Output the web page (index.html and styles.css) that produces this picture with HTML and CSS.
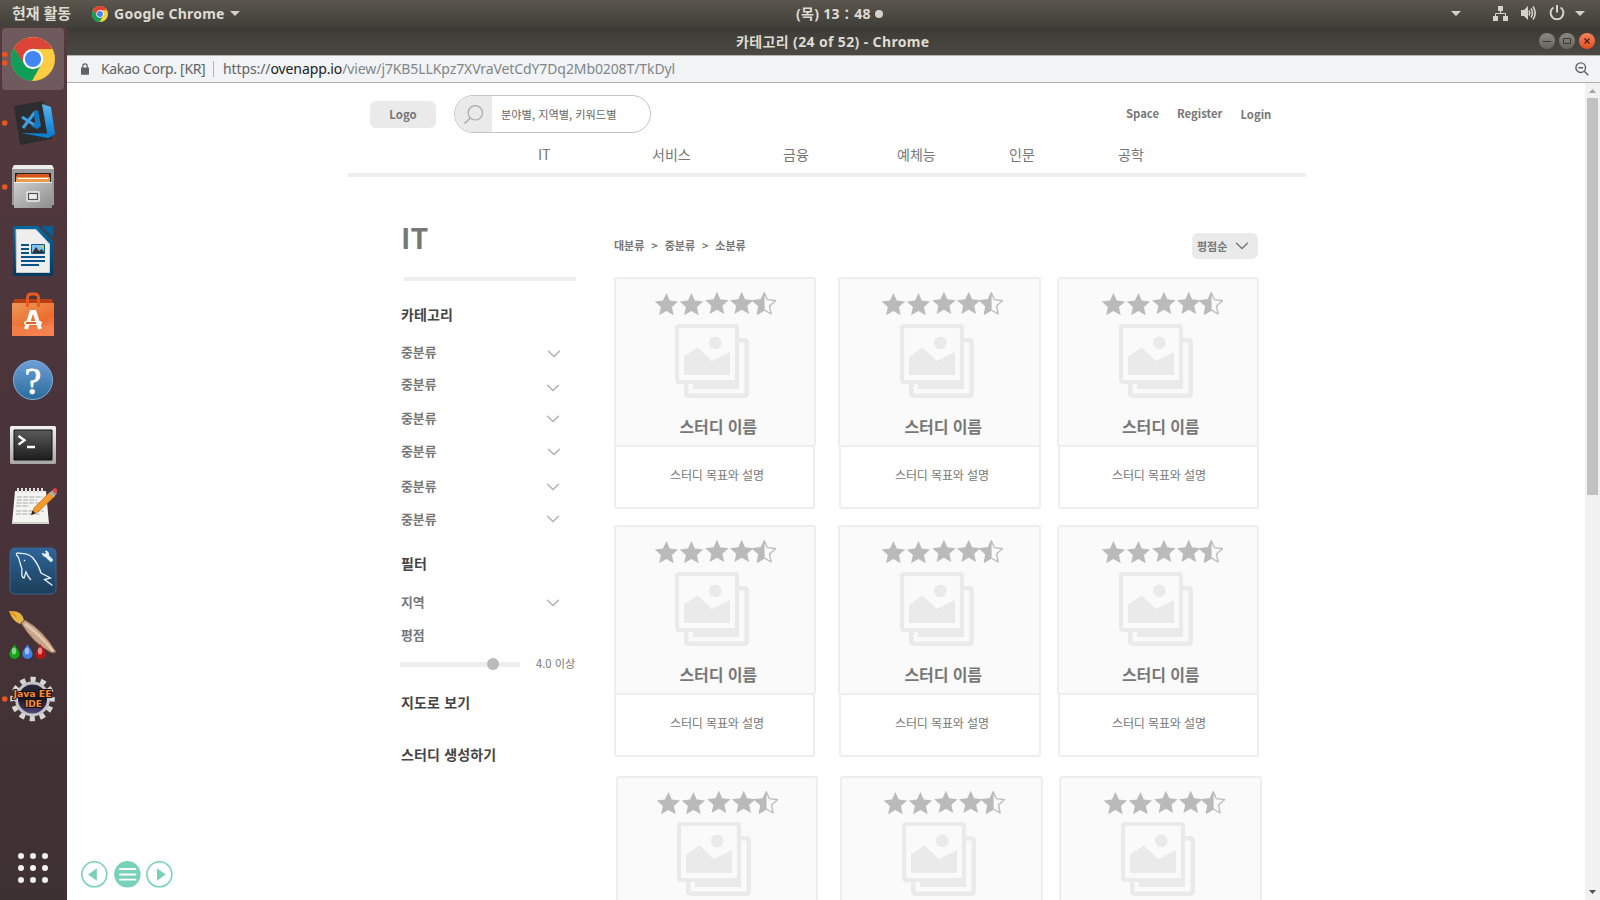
FILE: index.html
```html
<!DOCTYPE html>
<html lang="ko">
<head>
<meta charset="utf-8">
<title>카테고리 (24 of 52) - Chrome</title>
<link rel="stylesheet" href="styles.css">
</head>
<body>
<svg class="defs" width="0" height="0">
  <defs>
    <linearGradient id="gBlue" x1="0" y1="0" x2="0" y2="1"><stop offset="0" stop-color="#6f9ed8"/><stop offset="1" stop-color="#2a6c9b"/></linearGradient>
    <linearGradient id="gNavy" x1="0" y1="0" x2="0" y2="1"><stop offset="0" stop-color="#2d659b"/><stop offset="1" stop-color="#1c3e58"/></linearGradient>
    <linearGradient id="gWriter" x1="0" y1="0" x2="0" y2="1"><stop offset="0" stop-color="#0369a3"/><stop offset="1" stop-color="#043b5e"/></linearGradient>
    <linearGradient id="gBag" x1="0" y1="0" x2="0.6" y2="1"><stop offset="0" stop-color="#e99a58"/><stop offset="0.7" stop-color="#ef6c2f"/><stop offset="1" stop-color="#f58350"/></linearGradient>
    <linearGradient id="gSilver" x1="0" y1="0" x2="1" y2="1"><stop offset="0" stop-color="#cfcfcf"/><stop offset="1" stop-color="#8d8d8d"/></linearGradient>
    <linearGradient id="gTerm" x1="0" y1="0" x2="0" y2="1"><stop offset="0" stop-color="#5a5a5a"/><stop offset="1" stop-color="#1d1d1d"/></linearGradient>
    <linearGradient id="gFrame" x1="0" y1="0" x2="0" y2="1"><stop offset="0" stop-color="#f2f2f2"/><stop offset="1" stop-color="#a9a6a6"/></linearGradient>
    <linearGradient id="gVs" x1="0" y1="0" x2="0" y2="1"><stop offset="0" stop-color="#5bb5ee"/><stop offset="1" stop-color="#0078cf"/></linearGradient>
    <linearGradient id="gCore" x1="0" y1="0" x2="0" y2="1"><stop offset="0" stop-color="#2c2b3d"/><stop offset="0.5" stop-color="#191627"/><stop offset="1" stop-color="#5a4a86"/></linearGradient>
    <linearGradient id="gBtn" x1="0" y1="0" x2="0" y2="1"><stop offset="0" stop-color="#8b8983"/><stop offset="1" stop-color="#66645d"/></linearGradient>
    <linearGradient id="gClose" x1="0" y1="0" x2="0" y2="1"><stop offset="0" stop-color="#f58361"/><stop offset="1" stop-color="#e24f1d"/></linearGradient>
    <symbol id="chrome" viewBox="0 0 44 44">
      <circle cx="22" cy="22" r="22" fill="#fecd41"/>
      <path d="M2.950 11A22 22 0 0 1 41.300 12H22L12.500 27.500z" fill="#db4437"/>
      <path d="M2.950 11A22 22 0 0 0 21 44L30.500 27L12.800 26.500z" fill="#0f9d58"/>
      <circle cx="22" cy="22" r="10.200" fill="#fff"/>
      <circle cx="22" cy="22" r="8.100" fill="#4285f4"/>
    </symbol>
    <path id="star" d="M12 .3l3.400 7.600 8.300.9-6.200 5.500 1.800 8.200L12 18.300l-7.300 4.200 1.800-8.200L.3 8.800l8.300-.9z" fill="#bababa"/>
    <symbol id="rating" viewBox="0 0 126 26">
      <use href="#star" x=".4" y="1.700"/><use href="#star" x="25.400" y="1.700"/><use href="#star" x="50.900" y=".4"/><use href="#star" x="75.700" y=".4"/>
      <g transform="translate(97.700 .5)">
        <path d="M12.600 1.200l3.100 7 8.100 1-6 5.300 1.600 8-6.800-4-6.900 4 1.600-8-6-5.300 8.100-1z" fill="none" stroke="#bababa" stroke-width="1.300" stroke-linejoin="round"/>
        <path d="M12.900.6v18.200l-7.600 4.600 1.800-8.400-6.600-5.800 8.600-1z" fill="#bababa"/>
      </g>
    </symbol>
    <symbol id="picture" viewBox="0 0 74 74">
      <rect x="2" y="2" width="60" height="56" rx="2" fill="none" stroke="#eaeaea" stroke-width="4.200"/>
      <path d="M64 14h5.500a4.500 4.500 0 0 1 4.500 4.500v51a4.500 4.500 0 0 1-4.500 4.500h-56a4.500 4.500 0 0 1-4.500-4.500V60h4.500v9.500H69.500V18.500H64z" fill="#eaeaea"/>
      <path d="M18 60H64V65H18zM9 51V32.500L22.500 23.500 37 37 55 28V51z" fill="#eaeaea"/>
      <path d="M60 56h4v9h-4z" fill="#eaeaea"/>
      <circle cx="40.300" cy="18.800" r="6.400" fill="#eaeaea"/>
    </symbol>
    <symbol id="chev" viewBox="0 0 14 8"><path d="M1.500 1.200L7 6.500l5.500-5.300" fill="none" stroke="currentColor" stroke-width="1.400" stroke-linecap="round"/></symbol>
    <symbol id="down" viewBox="0 0 10 5"><path d="M0 0H10L5 5z" fill="#d5d2cb"/></symbol>
    <symbol id="drop" viewBox="0 0 11 15"><path d="M5.500 0C7 4 10.500 6 10.500 10a5 5 0 0 1-10 0C.5 6 4 4 5.500 0z" fill="currentColor"/><ellipse cx="5" cy="7" rx="2.200" ry="3.500" fill="#fff" opacity=".5"/></symbol>
  </defs>
</svg>

<header class="topbar">
  <span class="activities">현재 활동</span>
  <svg class="mini-chrome" width="16" height="16"><use href="#chrome"/></svg>
  <span class="app-name">Google Chrome</span>
  <svg class="app-arrow" width="10" height="5"><use href="#down"/></svg>
  <span class="clock">(목) 13：48</span>
  <svg class="clock-dot" width="8" height="8"><circle cx="4" cy="4" r="4" fill="#d5d2cb"/></svg>
  <svg class="tray" width="150" height="27" viewBox="1450 0 150 27">
    <g fill="#d5d2cb">
      <path d="M1451 11h10l-5 5zM1575 11h10l-5 5z"/>
      <path d="M1498 6h5v5h-5zM1493 16h5v5h-5zM1503 16h5v5h-5z"/>
      <path d="M1521 10h3l4-4v14l-4-4h-3z"/>
    </g>
    <g fill="none" stroke="#d5d2cb">
      <path d="M1500.500 11v3M1495.500 16v-2.500h10v2.500"/>
      <path d="M1529 10.500q1.500 2.500 0 5M1531 8.500q3 4.500 0 9M1533 6.500q4.500 6.500 0 13" stroke-width="1.600"/>
      <path d="M1553.500 7.500a6.400 6.400 0 1 0 7 0M1557 5v7.500" stroke-width="2"/>
    </g>
  </svg>
</header>

<div class="desktop">
  <nav class="dock">
    <svg class="slot" viewBox="0 0 67 64"><rect x="2" y="1" width="62" height="62" rx="4" fill="#6f5a5e"/><circle cx="4.700" cy="27.500" r="2.800" fill="#e95420"/><circle cx="4.700" cy="36" r="2.800" fill="#e95420"/><use href="#chrome" x="11" y="10" width="44" height="44"/></svg>
    <svg class="slot" viewBox="0 0 67 64"><circle cx="4.700" cy="32" r="2.800" fill="#e95420"/><path d="M14 15L43 10l9 38-32 6z" fill="#2d2d30"/><path d="M42 13l9 3 4 27-7 4z" fill="url(#gVs)"/><path d="M21 42l26 .500 8 .5-7 4z" fill="#0b7fd0"/><path d="M22 26l14 9M23 37L35 21" stroke="#3f9fdf" stroke-width="3"/><path d="M34 20l4-1 3 16-4 3-6-3 4-2z" fill="#1277c5"/></svg>
    <svg class="slot" viewBox="0 0 67 64"><circle cx="4.700" cy="32" r="2.800" fill="#e95420"/><path d="M14 10H52L54 14V50H12V14z" fill="#9b9b9b"/><path d="M14 10H52L54 14H12z" fill="#ececec"/><path d="M15 18H51V28H15z" fill="#242424"/><path d="M17 19h32v9H16v-6z" fill="#d7561e"/><path d="M16 22h34v6H16z" fill="#ea9c48"/><path d="M18 23.500H48" stroke="#fff"/><path d="M14 27H52V53H14z" fill="url(#gSilver)"/><path d="M14 27.500H52" stroke="#eee"/><rect x="26" y="36" width="14" height="11" rx="2" fill="#e1e1e1"/><rect x="28.500" y="38.500" width="9" height="6" fill="#eee" stroke="#555" stroke-width="1.200"/></svg>
    <svg class="slot" viewBox="0 0 67 64"><path d="M15 7H38L53 22V55q0 2-2 2H15q-2 0-2-2V9q0-2 2-2z" fill="url(#gWriter)"/><path d="M41 7H53V19z" fill="#0b5c93"/><path d="M16 10.500H36L49.500 25V53.500H16.500z" fill="#eee" stroke="#ccc"/><path d="M21 26h8M21 30h8M21 34h8M21 38h24M21 42h24M21 46h18" stroke="#065488" stroke-width="2"/><path d="M31.500 25.500H44.500V34.500H31.500z" fill="#7fc4ee" stroke="#0b5c93"/><path d="M32 34l4-6 3 4 3-2 2.500 4z" fill="#333"/><circle cx="42.500" cy="27.500" r="1.500" fill="#e8c33a"/></svg>
    <svg class="slot" viewBox="0 0 67 64"><path d="M14 16H52L53 21H13z" fill="#b93e10"/><path d="M12 20H54V53H12z" fill="url(#gBag)"/><path d="M12 43H54V53H12z" fill="#f58350" opacity=".7"/><path d="M27.500 24V15q0-4 4-4h3q4 0 4 4v9" fill="none" stroke="#e85a20" stroke-width="2.800"/><path d="M26 46L31.500 29h3L40 46" fill="none" stroke="#fff" stroke-width="4"/><rect x="24" y="38" width="18" height="4" rx="2" fill="#fff"/><path d="M26 40h10" stroke="#e8601f" stroke-width="2"/></svg>
    <svg class="slot" viewBox="0 0 67 64"><circle cx="33" cy="33" r="19.500" fill="url(#gBlue)" stroke="#7fb0df"/><text class="help-mark" x="33" y="46.500">?</text></svg>
    <svg class="slot" viewBox="0 0 67 64"><rect x="10" y="15" width="46" height="38" rx="1.500" fill="url(#gFrame)"/><path d="M14 19H52V49H14z" fill="url(#gTerm)" stroke="#111"/><path d="M18.500 25l6 4.300-6 4.300M27 36h8" fill="none" stroke="#fff" stroke-width="2.300"/></svg>
    <svg class="slot" viewBox="0 0 67 64"><path d="M15 16H46L49 49H12z" fill="#f4f4f1"/><path d="M12.500 48H48.500" stroke="#d4d4cf" stroke-width="2"/><path d="M17 22h26M17 25h20M16.500 28h24M16 31h13M16 36h28M16 39h25" stroke="#aaa" stroke-dasharray="5 1.200"/><path d="M18 13v5M22 13v5M26 13v5M30 13v5M34 13v5M38 13v5M42 13v5" stroke="#ddd" stroke-width="2"/><path d="M32 39l2-6L50 17l5 4-17 16z" fill="#f29a2e" stroke="#b8661a" stroke-width=".7"/><path d="M49 18l4-3 4 3-3 4z" fill="#aaa"/><path d="M52 15l3-2 2 1v3l-2 2z" fill="#e2444d"/><path d="M31 40l1.500-4.500 3 3z" fill="#222"/></svg>
    <svg class="slot" viewBox="0 0 67 64"><rect x="10" y="9" width="46" height="46" rx="5" fill="url(#gNavy)" stroke="#3c6f9f" stroke-width=".8"/><path d="M31 41q-3-3-5-8l-2 6q-3 0-2-9-1-3-2-6-1-6-3.500-8-1-3 4-1.500 9-.5 14 6.500 4 5 6.500 13l9.500 5-6 1.500 8 6" fill="none" stroke="#e6f0f7" stroke-width="1.300"/><circle cx="24.500" cy="21.500" r=".8" fill="#fff"/><path d="M46 16l5 5" stroke="#e6f0f7" stroke-width="3.800" stroke-linecap="round"/><path d="M42.500 14q1.500 4 4.500 2.500T45.500 12" fill="none" stroke="#e6f0f7" stroke-width="1.800"/></svg>
    <svg class="slot" viewBox="0 0 67 64"><path d="M9 8q13-1 15 9l-4 4q-7-2-11-13z" fill="#e3b44a"/><path d="M9 8q7 0 8 8z" fill="#f4930e"/><path d="M21 20l4-3q18 10 31 32-3 2-6 0Q33 40 21 20z" fill="#c9a486" stroke="#80604b"/><path d="M25 21q15 11 28 27" fill="none" stroke="#ecd8c4" stroke-width="2.500" stroke-dasharray="1.500 .7"/><use href="#drop" x="9" y="41" width="11" height="15" color="#14a314"/><use href="#drop" x="22" y="41" width="11" height="15" color="#3c7fe8"/><use href="#drop" x="35" y="41" width="11" height="15" color="#bd1414"/></svg>
    <svg class="slot" viewBox="0 0 67 64"><circle cx="4.700" cy="32" r="2.800" fill="#e95420"/><circle cx="32.500" cy="32" r="19.500" fill="none" stroke="#d6d6d6" stroke-width="5.500" stroke-dasharray="5.200 5.010" stroke-dashoffset="2.600"/><circle cx="32.500" cy="32" r="16" fill="url(#gCore)" stroke="#c4c4c4" stroke-width="3"/><text class="gear-text" x="32.500" y="30" textLength="38" lengthAdjust="spacingAndGlyphs">Java EE</text><text class="gear-text" x="33.500" y="40" textLength="17" lengthAdjust="spacingAndGlyphs">IDE</text></svg>
    <svg class="apps" viewBox="0 0 67 64"><g fill="#f2f2f2"><circle cx="21" cy="20" r="3"/><circle cx="33" cy="20" r="3"/><circle cx="45" cy="20" r="3"/><circle cx="21" cy="32" r="3"/><circle cx="33" cy="32" r="3"/><circle cx="45" cy="32" r="3"/><circle cx="21" cy="44" r="3"/><circle cx="33" cy="44" r="3"/><circle cx="45" cy="44" r="3"/></g></svg>
  </nav>

  <section class="window">
    <div class="titlebar">
      <span class="win-title">카테고리 (24 of 52) - Chrome</span>
      <div class="win-buttons">
        <svg width="16" height="16"><circle cx="8" cy="8" r="8" fill="url(#gBtn)"/><path d="M4 8.500h8" stroke="#3b3a35"/></svg>
        <svg width="16" height="16"><circle cx="8" cy="8" r="8" fill="url(#gBtn)"/><path d="M4.500 5.500h7v5h-7z" fill="none" stroke="#3b3a35"/></svg>
        <svg width="16" height="16"><circle cx="8" cy="8" r="8" fill="url(#gClose)"/><path d="M5.500 5.500l5 5m0-5l-5 5" stroke="#4a2414" stroke-width="1.300"/></svg>
      </div>
    </div>
    <div class="urlbar">
      <svg class="lock" width="8" height="12"><path d="M0 4.500h8V11q0 .7-.7.7H.7Q0 11.700 0 11z" fill="#5f6368"/><path d="M1.800 5V3a2.200 2.200 0 0 1 4.400 0v2" fill="none" stroke="#5f6368" stroke-width="1.200"/></svg>
      <span class="corp">Kakao Corp. [KR]</span>
      <span class="url-sep"></span>
      <span class="url">https://<b>ovenapp.io</b><i>/view/j7KB5LLKpz7XVraVetCdY7Dq2Mb0208T/TkDyl</i></span>
      <svg class="magnifier" width="14" height="14"><circle cx="5.700" cy="5.700" r="4.800" fill="none" stroke="#5f6368" stroke-width="1.400"/><path d="M3.300 5.700h4.800M9.300 9.300l4 4" stroke="#5f6368" stroke-width="1.500"/></svg>
    </div>

    <div class="viewport">
      <div class="page">
        <div class="site-head">
          <span class="logo">Logo</span>
          <div class="search">
            <span class="search-icon"><svg width="20" height="20"><circle cx="11.300" cy="7.800" r="7.200" fill="none" stroke="#a9a9a9" stroke-width="1.200"/><path d="M6.300 13L.5 18.500" stroke="#a9a9a9" stroke-width="1.500"/></svg></span>
            <span class="search-text">분야별, 지역별, 키워드별</span>
          </div>
          <span class="link space">Space</span>
          <span class="link register">Register</span>
          <span class="link login">Login</span>
        </div>
        <div class="site-nav"><span>IT</span><span>서비스</span><span>금융</span><span>예체능</span><span>인문</span><span>공학</span></div>

        <div class="columns">
          <aside class="side">
            <h1>IT</h1>
            <div class="rule"></div>
            <h2 class="h-cat">카테고리</h2>
            <div class="item i1"><span>중분류</span><svg><use href="#chev"/></svg></div>
            <div class="item i2"><span>중분류</span><svg><use href="#chev"/></svg></div>
            <div class="item i3"><span>중분류</span><svg><use href="#chev"/></svg></div>
            <div class="item i4"><span>중분류</span><svg><use href="#chev"/></svg></div>
            <div class="item i5"><span>중분류</span><svg><use href="#chev"/></svg></div>
            <div class="item i6"><span>중분류</span><svg><use href="#chev"/></svg></div>
            <h2 class="h-filter">필터</h2>
            <div class="item i7"><span>지역</span><svg><use href="#chev"/></svg></div>
            <div class="item i8"><span>평점</span></div>
            <div class="score"><svg width="120" height="12"><path d="M0 4H120V9H0z" fill="#eee"/><circle cx="93" cy="6" r="6" fill="#bababa"/></svg><span>4.0 이상</span></div>
            <h2 class="h-map">지도로 보기</h2>
            <h2 class="h-new">스터디 생성하기</h2>
          </aside>

          <main class="main">
            <div class="tools">
              <div class="crumbs"><span>대분류</span><span>&gt;</span><span>중분류</span><span>&gt;</span><span>소분류</span></div>
              <div class="sort"><span>평점순</span><svg width="14" height="8"><use href="#chev"/></svg></div>
            </div>
            <div class="cards">
              <article class="card c1"><div class="head"><svg class="stars"><use href="#rating"/></svg><svg class="pic"><use href="#picture"/></svg><h3>스터디 이름</h3></div><div class="body"><p>스터디 목표와 설명</p></div></article>
              <article class="card c2"><div class="head"><svg class="stars"><use href="#rating"/></svg><svg class="pic"><use href="#picture"/></svg><h3>스터디 이름</h3></div><div class="body"><p>스터디 목표와 설명</p></div></article>
              <article class="card c3"><div class="head"><svg class="stars"><use href="#rating"/></svg><svg class="pic"><use href="#picture"/></svg><h3>스터디 이름</h3></div><div class="body"><p>스터디 목표와 설명</p></div></article>
            </div>
            <div class="cards">
              <article class="card c1"><div class="head"><svg class="stars"><use href="#rating"/></svg><svg class="pic"><use href="#picture"/></svg><h3>스터디 이름</h3></div><div class="body"><p>스터디 목표와 설명</p></div></article>
              <article class="card c2"><div class="head"><svg class="stars"><use href="#rating"/></svg><svg class="pic"><use href="#picture"/></svg><h3>스터디 이름</h3></div><div class="body"><p>스터디 목표와 설명</p></div></article>
              <article class="card c3"><div class="head"><svg class="stars"><use href="#rating"/></svg><svg class="pic"><use href="#picture"/></svg><h3>스터디 이름</h3></div><div class="body"><p>스터디 목표와 설명</p></div></article>
            </div>
            <div class="cards last">
              <article class="card c1"><div class="head"><svg class="stars"><use href="#rating"/></svg><svg class="pic"><use href="#picture"/></svg></div></article>
              <article class="card c2"><div class="head"><svg class="stars"><use href="#rating"/></svg><svg class="pic"><use href="#picture"/></svg></div></article>
              <article class="card c3"><div class="head"><svg class="stars"><use href="#rating"/></svg><svg class="pic"><use href="#picture"/></svg></div></article>
            </div>
          </main>
        </div>
      </div>

      <div class="scrollbar">
        <svg width="15" height="15"><path d="M4 10h7L7.500 6z" fill="#a3a3a3"/></svg>
        <div class="thumb"></div>
        <svg class="sb-down" width="15" height="15"><path d="M4 5h7L7.500 9z" fill="#505050"/></svg>
      </div>

      <div class="pager">
        <svg width="27" height="27"><circle cx="13.300" cy="13.300" r="12.500" fill="none" stroke="#78d1b9" stroke-width="1.600"/><path d="M15.800 7.300v12.400L7 13.500z" fill="#78d1b9"/></svg>
        <svg width="27" height="27"><circle cx="13.400" cy="13.300" r="13.200" fill="#78d1b9"/><path d="M6 8h15.500M6 13.500h15.500M6 18.700h15.500" stroke="#fff" stroke-width="1.800" stroke-linecap="round"/></svg>
        <svg width="27" height="27"><circle cx="13.400" cy="13.300" r="12.500" fill="none" stroke="#78d1b9" stroke-width="1.600"/><path d="M11 7.300v12.400l8.800-6.200z" fill="#78d1b9"/></svg>
      </div>
    </div>
  </section>
</div>
</body>
</html>
```
FILE: styles.css
```css
* { box-sizing: border-box; }
body { margin: 0; width: 1600px; height: 900px; overflow: hidden; background: #fff; font-family: "Noto Sans CJK KR", sans-serif; display: flex; flex-direction: column; }
h1, h2, h3, p { margin: 0; }
span, h1, h2, h3, p { white-space: nowrap; }
svg { display: block; flex: none; }
.defs { position: absolute; }

/* desktop top bar */
.topbar { height: 27px; flex: none; display: flex; align-items: center; background: linear-gradient(#5a564d, #403f39); color: #dfdbd2; font: bold 14px/27px "Noto Sans", "Noto Sans CJK KR", sans-serif; }
.activities { width: 60px; margin-left: 12px; font-size: 15px; }
.mini-chrome { margin-left: 20px; }
.app-name { width: 112px; margin-left: 6px; letter-spacing: .25px; }
.app-arrow { margin-left: 4px; }
.clock { width: 78px; margin-left: 556px; letter-spacing: .3px; }
.clock-dot { margin-left: 1px; }
.tray { margin-left: auto; }

.desktop { flex: 1; min-height: 0; display: flex; }
.dock { width: 67px; flex: none; display: flex; flex-direction: column; background: linear-gradient(#533a3e, #4a343b 45%, #413135 85%, #3e3134); }
.slot, .apps { width: 67px; height: 64px; }
.apps { margin-top: 105px; }
.gear-text { font: bold 9.500px "DejaVu Sans", sans-serif; text-anchor: middle; fill: #ff8a2a; stroke: #111; stroke-width: 2px; paint-order: stroke; }
.help-mark { font: 37px "Liberation Serif", serif; text-anchor: middle; fill: #fff; stroke: #fff; stroke-width: .8px; }

/* browser window */
.window { flex: 1; min-width: 0; display: flex; flex-direction: column; }
.titlebar { height: 28px; flex: none; display: flex; align-items: center; background: linear-gradient(#3b3a35, #4b4942); color: #dfdbd2; font: bold 14px/28px "Noto Sans", "Noto Sans CJK KR", sans-serif; }
.win-title { margin-left: 669px; padding-top: 1px; letter-spacing: .37px; }
.win-buttons { display: flex; gap: 4px; margin: 0 5px 0 auto; }
.urlbar { height: 28px; flex: none; display: flex; align-items: center; background: #f1f3f4; border-top: 1px solid #b3b3b1; border-bottom: 1px solid #b0b0b0; color: #5f6368; font: 14px/26px "Noto Sans", sans-serif; }
.lock { margin-left: 14px; }
.corp { width: 106px; margin-left: 12px; letter-spacing: -.33px; }
.url-sep { width: 1px; height: 16px; margin-left: 6px; background: #b5b7b9; }
.url { margin-left: 9px; letter-spacing: -.1px; }
.url b { font-weight: normal; color: #202124; }
.url i { font-style: normal; color: #80868b; }
.magnifier { margin: 0 11px 0 auto; }

.viewport { position: relative; flex: 1; min-height: 0; display: flex; overflow: hidden; }
.page { width: 1518px; padding-left: 281px; color: #777; }
.scrollbar { width: 15px; flex: none; display: flex; flex-direction: column; align-items: center; background: #f1f1f1; }
.thumb { width: 11px; height: 397px; background: #c1c1c1; }
.sb-down { margin-top: auto; }
.pager { position: absolute; left: 14px; bottom: 12px; display: flex; gap: 5.700px; }

/* site header */
.site-head { height: 52px; padding-top: 12px; display: flex; align-items: flex-start; }
.logo { width: 66px; height: 27px; margin: 6px 0 0 22px; border-radius: 6px; background: #eaeaea; font: bold 11.400px/27px "Noto Sans CJK KR", sans-serif; text-align: center; }
.search { width: 197px; height: 38px; margin-left: 18px; display: flex; border: 1px solid #c4c4c4; border-radius: 19px; overflow: hidden; }
.search-icon { width: 37px; padding: 9px 0 0 9px; background: #eaeaea; }
.search-text { margin-left: 9px; font-size: 11.200px; line-height: 36px; color: #666; }
.link { font-weight: bold; font-size: 11.300px; line-height: 18px; margin-top: 9px; }
.space { width: 33px; margin-left: 475px; }
.register { width: 45px; margin-left: 18px; }
.login { margin-left: 18.500px; margin-top: 10px; }
.site-nav { width: 958px; height: 42px; display: flex; border-bottom: 4px solid #eee; font-size: 14px; line-height: 38px; }
.site-nav span { width: 40px; margin-right: 74px; }
.site-nav span:nth-child(1) { width: 14px; margin: 0 100px 0 190px; }
.site-nav span:nth-child(2) { margin-right: 91px; }
.site-nav span:nth-child(5) { width: 27px; margin-right: 82px; }
.site-nav span:nth-child(3) { width: 27px; margin-right: 87px; }
.site-nav span:nth-child(4) { margin-right: 72px; }

.columns { display: flex; }
.side { width: 214px; margin-left: 52px; }
.side h1 { height: 60px; margin-top: 40px; padding-left: 1px; font-size: 28.500px; line-height: 40px; }
.rule { width: 172px; height: 4px; margin-left: 4px; background: #eee; }
.side h2 { height: 20px; padding-left: 1px; font-size: 14px; line-height: 20px; color: #444; letter-spacing: .15px; }
.side .h-cat { margin-top: 23px; }
.side .h-filter { margin-top: 23px; }
.side .h-map { margin-top: 21.500px; }
.side .h-new { margin-top: 32px; }
.item { height: 20px; padding-left: 1px; display: flex; align-items: center; font-size: 12.900px; line-height: 18px; font-weight: bold; }
.item span { width: 145px; margin-top: -2px; }
.item svg { width: 14px; height: 8px; color: #b0b0b0; }
.i1 { margin-top: 19px; }
.i2 { margin-top: 12px; }
.i3 { margin-top: 14px; }
.i4 { margin-top: 13px; }
.i5 { margin-top: 15px; }
.i6 { margin-top: 13px; }
.i7 { margin-top: 20px; }
.i8 { margin-top: 13px; }
.i1 svg { margin: 1px 0 0 1px; }
.i2 svg { margin-top: 5px; }
.i4 svg { margin-left: 1px; }
.i6 svg { margin-top: -2px; }
.i7 svg { margin-top: -1px; }
.score { height: 12px; margin-top: 12px; display: flex; align-items: center; gap: 16px; font-size: 11.200px; line-height: 12px; }
.score span { margin-top: -2px; }

/* listing */
.main { width: 660px; margin-top: 56px; }
.tools { width: 644px; height: 44px; display: flex; justify-content: space-between; align-items: flex-start; font-weight: bold; font-size: 11px; line-height: 26px; }
.crumbs { display: flex; gap: 6.900px; line-height: 24px; }
.sort { width: 66px; height: 26px; padding-left: 5px; display: flex; align-items: center; gap: 8px; border-radius: 6px; background: #eaeaea; }
.cards { height: 248px; display: flex; }
.last { height: 131px; padding: 3px 0 0 2px; overflow: hidden; }
.card { width: 203px; }
.c1 { margin-right: 21px; }
.c2 { margin-right: 16px; }
.head { width: 202px; height: 170px; flex: none; padding-top: 12px; border: 2px solid #eee; border-radius: 3px; background: #fafafa; }
.c2 .head, .last .c3 .head { width: 203px; }
.body { width: 202px; height: 64px; margin: -2px 0 0 1px; border: 2px solid #eee; border-radius: 3px; }
.c1 .body { width: 201px; margin-left: 0; }
.c3 .body { width: 201px; }
.stars { width: 126px; height: 26px; margin-left: 38px; }
.c2 .stars { margin-left: 41px; }
.c3 .stars { margin-left: 42px; }
.pic { width: 74px; height: 74px; margin: 7px 0 0 59px; }
.c2 .pic { margin-left: 60px; }
.c3 .pic { margin-left: 60px; }
.last .pic { margin-top: 6px; }
.card h3 { margin: 16px 0 0 63.500px; font-size: 16px; line-height: 24px; letter-spacing: -.1px; }
.c2 h3 { margin-left: 64.500px; }
.c3 h3 { margin-left: 63px; }
.body p { margin: 18px 0 0 54px; font-size: 12px; line-height: 20px; letter-spacing: -.12px; }
.c3 .body p { margin-left: 52px; }
```
